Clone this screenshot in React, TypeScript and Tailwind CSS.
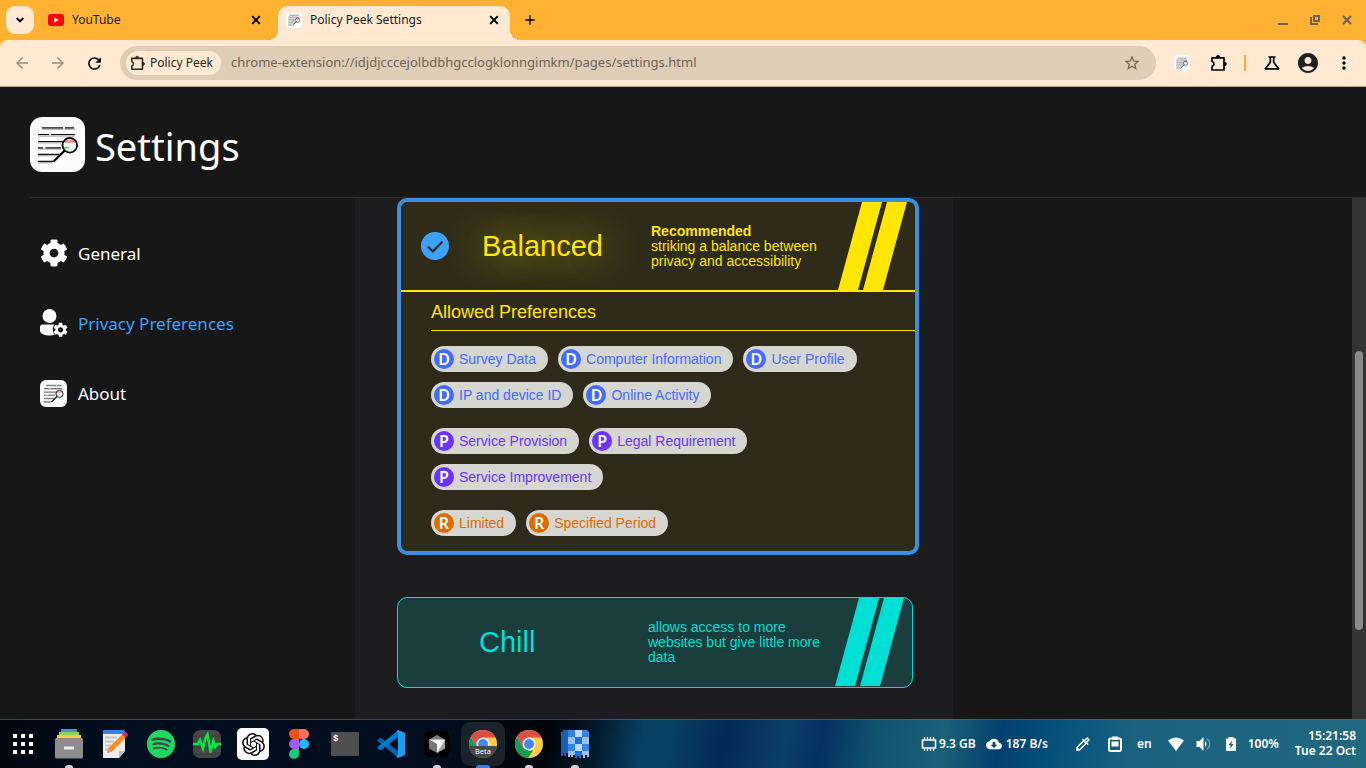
import React from "react";
import { FaCog } from "react-icons/fa";
import {
  MdArrowBack,
  MdArrowForward,
  MdRefresh,
  MdStarOutline,
  MdOutlineScience,
  MdAccountCircle,
  MdMoreVert,
  MdSettings,
  MdAdd,
  MdCloudDownload,
  MdOutlineColorize,
} from "react-icons/md";
import { SiOpenai, SiSpotify } from "react-icons/si";

function PeekLogo({ className }: { className: string }) {
  return (
    <svg viewBox="0 0 55 55" className={className} aria-hidden="true">
      <rect width="55" height="55" rx="12" fill="#fcfcfc" />
      <g stroke="#b9b9b9" strokeWidth="1.6">
        <path d="M12 12.3H45M8 19H45M8 25.8H33M8 32H31M8 38.6H28M8 45.6H22" />
      </g>
      <g stroke="#111" strokeWidth="1.2">
        <path d="M12 10.8H33M35 10.8H44M8 17.5H19M21 17.5H45M8 24.5H34M8 30.8H13M15.500 30.800H31M8 37.300H29M8 44.300H23" />
      </g>
      <path d="M34.500 24.500H45" stroke="#f28a86" strokeWidth="2.6" />
      <path d="M34 30.800H39" stroke="#62e36a" strokeWidth="2" />
      <circle cx="39.8" cy="28.3" r="7.3" fill="none" stroke="#0a0a0a" strokeWidth="1.8" />
      <path d="M34.600 33.600L23.300 44.800" stroke="#0a0a0a" strokeWidth="2.2" />
    </svg>
  );
}

function Puzzle({ className }: { className: string }) {
  return (
    <svg viewBox="0 0 18 18" className={className} fill="none" stroke="currentColor" strokeWidth="1.7" strokeLinejoin="round" aria-hidden="true">
      <path d="M2 3.800H14V16H2V12.300C4.600 11.800 4.600 8 2 7.500Z" />
      <path d="M6.200 3.200a1.800 1.800 0 0 1 3.600 0ZM14.600 8.100a1.800 1.800 0 0 1 0 3.600Z" fill="currentColor" strokeWidth="0.800" />
    </svg>
  );
}

function CloseMark() {
  return (
    <svg viewBox="0 0 10 10" className="size-2.5" stroke="currentColor" strokeWidth="1.900" aria-hidden="true">
      <path d="M1.200 1.200L8.800 8.800M8.800 1.200L1.200 8.800" />
    </svg>
  );
}

function UserGear() {
  return (
    <svg viewBox="0 0 28 28" className="size-7" fill="#fff" aria-hidden="true">
      <circle cx="9.500" cy="7" r="7" />
      <path d="M2.300 15.500H14.500C12.300 18 12.200 22.500 14.800 26.100C9 27.200 0 26.300 0 21.500V18C0 16.500 1 15.500 2.300 15.500Z" />
      <MdSettings x="11.800" y="12" size={17.5} color="#fff" />
    </svg>
  );
}

function TabStrip() {
  return (
    <div className="flex h-10 items-start bg-[#ffb232] pt-1.5 pl-1.5 text-[12px] text-[#1d1a16]">
      <button aria-label="Search tabs" className="flex h-7 w-7 items-center justify-center rounded-[9px] bg-[#ffe9d2] text-black">
        <svg viewBox="0 0 8 6" className="h-1.5 w-2" fill="none" stroke="currentColor" strokeWidth="1.900" aria-hidden="true">
          <path d="M0.700 1L4 4.300L7.300 1" />
        </svg>
      </button>
      <div className="ml-3.5 flex h-7 w-[213px] items-center gap-2">
        <svg viewBox="0 0 16 12" className="h-3 w-4" aria-hidden="true">
          <rect width="16" height="12" rx="3" fill="#f00" />
          <path d="M6.300 3.500L10.800 6L6.300 8.500Z" fill="#fff" />
        </svg>
        <span className="flex-1">YouTube</span>
        <button aria-label="Close YouTube" className="text-black"><CloseMark /></button>
      </div>
      <div className="relative ml-[17px] flex h-[34px] w-[232px] items-center gap-2 rounded-t-[10px] bg-[#ffe9d2] pr-[11px] pb-1.5 pl-2">
        <span className="absolute bottom-0 -left-2.5 size-2.5 bg-[radial-gradient(circle_at_0_0,transparent_10px,#ffe9d2_10px)]" />
        <span className="absolute -right-2.5 bottom-0 size-2.5 bg-[radial-gradient(circle_at_100%_0,transparent_10px,#ffe9d2_10px)]" />
        <PeekLogo className="size-4" />
        <span className="flex-1">Policy Peek Settings</span>
        <button aria-label="Close Policy Peek Settings" className="text-black"><CloseMark /></button>
      </div>
      <button aria-label="New tab" className="ml-3 flex h-7 w-4 items-center justify-center text-black">
        <MdAdd size={18} />
      </button>
      <div className="ml-auto flex h-7 items-center gap-[22px] pr-3.5 text-[#6d6357]">
        <button aria-label="Minimize" className="block size-2.5 border-b-2 border-current" />
        <button aria-label="Restore">
          <svg viewBox="0 0 10 10" className="size-2.5" fill="none" stroke="currentColor" strokeWidth="2" aria-hidden="true">
            <path d="M4 1H9V6H4ZM1 2V9H8" />
          </svg>
        </button>
        <button aria-label="Close window">
          <svg viewBox="0 0 10 10" className="size-2.5" stroke="currentColor" strokeWidth="2.200" aria-hidden="true">
            <path d="M1 1L9 9M9 1L1 9" />
          </svg>
        </button>
      </div>
    </div>
  );
}

function Toolbar() {
  return (
    <div className="bg-[#ffb232]">
      <div className="flex h-[47px] items-center rounded-t-lg border-b border-[#bba997] bg-[#ffe9d2] pr-3 pl-[13px] text-black">
        <button aria-label="Back" className="text-[#9c8f81]"><MdArrowBack size={18} /></button>
        <button aria-label="Forward" className="ml-[18px] text-[#9c8f81]"><MdArrowForward size={18} /></button>
        <button aria-label="Reload" className="ml-[18px]"><MdRefresh size={19} /></button>
        <div className="ml-4 flex h-[34px] flex-1 items-center rounded-full bg-[#dfcdb8] pr-[15px] pl-1.5">
          <span className="flex h-6 items-center gap-1 rounded-full bg-[#ffe9d2] pr-2 pl-1 text-[12px] text-[#2b2723]">
            <Puzzle className="size-4" />
            Policy Peek
          </span>
          <input
            aria-label="Address"
            readOnly
            value="chrome-extension://idjdjcccejolbdbhgcclogklonngimkm/pages/settings.html"
            className="ml-2.5 min-w-0 flex-1 bg-transparent text-[13px] text-[#6d6357] outline-none"
          />
          <button aria-label="Bookmark" className="text-[#6d6357]"><MdStarOutline size={18} /></button>
        </div>
        <div className="ml-[18px] flex items-center">
          <PeekLogo className="size-4" />
          <button aria-label="Extensions" className="ml-5"><Puzzle className="size-[18px]" /></button>
          <span className="ml-4 h-4 w-0.5 bg-[#ffb232]" />
          <button aria-label="Labs" className="ml-4"><MdOutlineScience size={20} /></button>
          <button aria-label="Profile" className="ml-3.5 text-[#1f1f1f]"><MdAccountCircle size={24} /></button>
          <button aria-label="Menu" className="ml-3.5"><MdMoreVert size={20} /></button>
        </div>
      </div>
    </div>
  );
}

const navItems = [
  { label: "General", icon: <FaCog size={28} color="#fff" />, active: false },
  { label: "Privacy Preferences", icon: <UserGear />, active: true },
  { label: "About", icon: <PeekLogo className="size-[27px]" />, active: false },
];

function Sidebar() {
  return (
    <nav className="flex w-[355px] shrink-0 flex-col gap-[42px] pt-[41px] pl-10">
      {navItems.map((item) => (
        <a key={item.label} href="#" className={`flex h-7 items-center gap-2.5 text-[17px] ${item.active ? "text-[#3ca2ff]" : "text-white"}`}>
          <span className="flex w-7">{item.icon}</span>
          <span className="pt-0.5">{item.label}</span>
        </a>
      ))}
    </nav>
  );
}

function Stripes() {
  return (
    <svg viewBox="0 0 69 88" className="ml-auto h-[88px] w-[69px] shrink-0" fill="currentColor" aria-hidden="true">
      <path d="M24 0H44L20 88H0ZM49 0H69L45 88H25Z" />
    </svg>
  );
}

const groups = [
  { letter: "D", text: "text-[#426bff]", badge: "bg-[#426bff]", items: ["Survey Data", "Computer Information", "User Profile", "IP and device ID", "Online Activity"] },
  { letter: "P", text: "text-[#6a33ff]", badge: "bg-[#6a33ff]", items: ["Service Provision", "Legal Requirement", "Service Improvement"] },
  { letter: "R", text: "text-[#de6b00]", badge: "bg-[#de6b00]", items: ["Limited", "Specified Period"] },
];

function BalancedCard() {
  return (
    <section className="box-content w-[514px] overflow-hidden rounded-[10px] border-4 border-[#3a8fe0] bg-[#2f2b1a] text-[#ffe600]">
      <div className="flex h-[90px] items-center border-b-2 border-[#ffe600] pr-2">
        <span className="ml-5 flex size-7 items-center justify-center rounded-full bg-[#3ca2ff]">
          <svg viewBox="0 0 28 28" className="size-7" fill="none" stroke="#2f2b1a" strokeWidth="2.300" strokeLinecap="round" strokeLinejoin="round" aria-hidden="true">
            <path d="M7.500 15.300L11.800 19.500L20.800 10.300" />
          </svg>
        </span>
        <h2 className="ml-[33px] w-[169px] text-[29px] leading-8 [text-shadow:0_0_40px_#ffe600]">Balanced</h2>
        <p className="w-[178px] text-[14px] leading-[15px]">
          <strong>Recommended</strong>
          <br />
          striking a balance between privacy and accessibility
        </p>
        <Stripes />
      </div>
      <div className="pb-[15px] pl-[30px]">
        <h3 className="border-b border-[#ffe600] pt-[9px] pb-[7px] text-[18px] leading-[22px]">Allowed Preferences</h3>
        <div className="flex flex-col gap-5 pt-[15px]">
          {groups.map((g) => (
            <ul key={g.letter} className={`flex flex-wrap gap-2.5 text-[14px] ${g.text}`}>
              {g.items.map((item) => (
                <li key={item} className="flex h-[26px] items-center gap-[5px] rounded-full bg-[#d6d6d1] pr-3 pl-[3px]">
                  <span className={`flex size-5 items-center justify-center rounded-full font-['Noto_Sans'] text-[16px] leading-5 font-semibold text-white ${g.badge}`}>{g.letter}</span>
                  {item}
                </li>
              ))}
            </ul>
          ))}
        </div>
      </div>
    </section>
  );
}

function ChillCard() {
  return (
    <section className="mt-[42px] box-content flex w-[514px] overflow-hidden rounded-[10px] border border-[#00dfd3] bg-[#1a3e3d] pb-px text-[#00dfd3]">
      <div className="flex h-[88px] flex-1 items-center pr-2">
        <h2 className="ml-[81px] w-[169px] text-[29px] leading-8">Chill</h2>
        <p className="w-[178px] text-[14px] leading-[15px]">allows access to more websites but give little more data</p>
        <Stripes />
      </div>
    </section>
  );
}

function ChromeLogo({ beta = false }: { beta?: boolean }) {
  return (
    <svg viewBox="0 0 28 28" className="size-7" aria-hidden="true">
      <clipPath id={beta ? "beta-disc" : "chrome-disc"}>
        <circle cx="14" cy="14" r="14" />
      </clipPath>
      <g clipPath={beta ? "url(#beta-disc)" : "url(#chrome-disc)"}>
        <rect width="28" height="28" fill="#ffce44" />
        <path d="M0 5L1.900 7L8.300 17.500L14 20.500H18L13 28H0Z" fill="#109d58" />
        <path d="M1.900 7L8.300 17.500L14 7.500H28V0H0Z" fill="#dd4f43" />
        <circle cx="14" cy="14" r="6.500" fill="#f4f4f4" />
        <circle cx="14" cy="14" r="5" fill="#4587f3" />
        {beta && <rect y="16" width="28" height="12" fill="#484848" />}
      </g>
      {beta && <text x="14" y="24" textAnchor="middle" fontSize="7.500" fontWeight="400" fill="#fff" fontFamily="Noto Sans">Beta</text>}
    </svg>
  );
}

const apps = [
  {
    name: "Show apps",
    mark: "",
    icon: (
      <svg viewBox="0 0 20 20" className="size-5" fill="#fff" aria-hidden="true">
        <path d="M0 0h4v4h-4zM8 0h4v4h-4zM16 0h4v4h-4zM0 8h4v4h-4zM8 8h4v4h-4zM16 8h4v4h-4zM0 16h4v4h-4zM8 16h4v4h-4zM16 16h4v4h-4z" />
      </svg>
    ),
  },
  {
    name: "Files",
    mark: "w-2 bg-[#d0d0d0]",
    icon: (
      <svg viewBox="0 0 28 30" className="h-[30px] w-7" aria-hidden="true">
        <path d="M6 0H22V4H6Z" fill="#4a90d9" />
        <path d="M4 3H24V7H4Z" fill="#8bd254" />
        <path d="M2 6H26V10H2Z" fill="#f7c84a" />
        <rect y="9" width="28" height="20.500" rx="1.500" fill="#8d8d8d" />
        <rect x="9" y="17.500" width="10" height="3" rx="0.500" fill="#eee" />
      </svg>
    ),
  },
  {
    name: "Text editor",
    mark: "",
    icon: (
      <svg viewBox="0 0 28 28" className="size-7" aria-hidden="true">
        <path d="M2 1H24V21L18 28H2Z" fill="#ececec" />
        <path d="M18 28V21H24Z" fill="#bdbdbd" />
        <path d="M2 1.500Q2 0 3.500 0H22.500Q24 0 24 1.500V4H2Z" fill="#3584e4" />
        <path d="M4 7.500H16M4 11.500H13M4 15.500H10M4 19.500H8" stroke="#c3c3c3" strokeWidth="2" />
        <path d="M6 23L7.500 18L21 4.500L24.500 8L11 21.500Z" fill="#ff8c1f" />
        <path d="M6 23L7.500 18L11 21.500Z" fill="#d9a066" />
        <path d="M21 4.500L23 2.500Q24.500 1.500 26 3T26.500 6L24.500 8Z" fill="#e5256b" />
      </svg>
    ),
  },
  { name: "Spotify", mark: "", icon: <span className="rounded-full bg-[#3a4a40]"><SiSpotify size={28} color="#1ed760" /></span> },
  {
    name: "System monitor",
    mark: "",
    icon: (
      <svg viewBox="0 0 28 28" className="size-7" aria-hidden="true">
        <rect width="28" height="28" rx="7" fill="#474747" />
        <path d="M0 6H28M0 12H28M0 18H28M0 24H28" stroke="#3b3b3b" />
        <path d="M0 14H5L7 10L10 18.500L12.500 8L14.500 4.500L17.500 22.500L20.300 11L22.300 17L24.300 14H28" fill="none" stroke="#00e93f" strokeWidth="2.600" />
      </svg>
    ),
  },
  { name: "ChatGPT", mark: "", icon: <span className="flex size-8 items-center justify-center rounded-[5px] bg-white"><SiOpenai size={23} color="#111" /></span> },
  {
    name: "Figma",
    mark: "",
    icon: (
      <svg viewBox="0 0 20 30" className="h-[30px] w-5" aria-hidden="true">
        <path d="M10 0H5a5 5 0 0 0 0 10h5Z" fill="#f24e1e" />
        <path d="M10 0h5a5 5 0 0 1 0 10h-5Z" fill="#ff7262" />
        <path d="M10 10H5a5 5 0 0 0 0 10h5Z" fill="#a259ff" />
        <circle cx="15" cy="15" r="5" fill="#1abcfe" />
        <path d="M10 20H5a5 5 0 1 0 5 5Z" fill="#0acf83" />
      </svg>
    ),
  },
  { name: "Terminal", mark: "", icon: <span className="h-6 w-7 rounded-[1px] bg-[#4f4f4f] pt-px pl-0.5 text-left font-['Liberation_Mono',monospace] text-[9px] leading-3 font-bold text-white">$</span> },
  {
    name: "Code",
    mark: "",
    icon: (
      <svg viewBox="0 0 28 28" className="size-7" aria-hidden="true">
        <path d="M1 9.500L3 8Q3.500 7.700 4 8L21 21V27.500L0.500 11Q0 10.200 1 9.500Z" fill="#0065a9" />
        <path d="M1 18.500L3 20Q3.500 20.300 4 20L21 7V0.500L0.500 17Q0 17.800 1 18.500Z" fill="#007acc" />
        <path d="M21 0L28 3V25L21 28Q19.500 27.500 19.500 26L21 24V4L19.500 2Q19.500 0.500 21 0Z" fill="#1f9cf0" />
      </svg>
    ),
  },
  {
    name: "Cursor",
    mark: "w-2 bg-[#d0d0d0]",
    icon: (
      <svg viewBox="0 0 26 26" className="size-[26px]" aria-hidden="true">
        <rect width="26" height="26" rx="5" fill="#000" />
        <path d="M13 4L21 8.500L13 13L5 8.500Z" fill="#7b7b7b" />
        <path d="M5 8.500L13 13V22L5 17.500Z" fill="#777" />
        <path d="M21 8.500V17.500L13 22V13Z" fill="#a5a5a5" />
        <path d="M5 8.500H21L13 22V13Z" fill="#f4f4f4" />
      </svg>
    ),
  },
  { name: "Chrome Beta", mark: "w-3.5 bg-[#3584e4]", icon: <span className="flex size-11 items-center justify-center rounded-[9px] bg-[#1b222b]"><ChromeLogo beta /></span> },
  { name: "Chrome", mark: "w-2 bg-[#d0d0d0]", icon: <ChromeLogo /> },
  {
    name: "Mosaic",
    mark: "w-2 bg-[#d0d0d0]",
    icon: (
      <svg viewBox="0 0 28 28" className="size-7" aria-hidden="true">
        <path d="M3 0H26L28 2V27H26V25H24V28H22V25H20V28H18V26H16V28H14V25H12V27H10V25H9V27H7V23H5V26H3V23H2V26H0V3Z" fill="#3584e4" />
        <path d="M3 0H7V23H5V26H3V23H2V26H0V3Z" fill="#1a5fb4" />
        <path d="M14 0H21V7H14ZM14 14H21V21H14Z" fill="#bcd8fb" />
        <path d="M7 7H14V14H7ZM21 7H28V14H21ZM7 21H14V25H12V27H10V25H9V27H7ZM21 21H28V27H26V25H24V28H22V25H21Z" fill="#99c1f1" />
        <path d="M14 7H21V14H14ZM14 21H21V25H20V28H18V26H16V28H14Z" fill="#1c71d8" />
      </svg>
    ),
  },
];

function Taskbar() {
  return (
    <footer className="flex h-[49px] shrink-0 items-stretch border-t border-[#2f7fa5]/60 bg-[linear-gradient(100deg,#010610_0%,#02101f_10%,#010d1c_22%,#020f20_32%,#010409_40%,#04182a_43.5%,#064163_47%,#073f63_49%,#022a57_53%,#0a4068_57.5%,#033060_60%,#11536f_64%,#1a6079_69%,#03406f_73%,#04517b_77%,#1a6380_83%,#21697f_100%)] bg-origin-border text-[12px] font-semibold text-white">
      <div className="flex">
        {apps.map((app) => (
          <button key={app.name} aria-label={app.name} className="relative flex w-[46px] items-center justify-center">
            {app.icon}
            {app.mark && <span className={`absolute bottom-0 h-[3px] rounded-t-sm ${app.mark}`} />}
          </button>
        ))}
      </div>
      <div className="ml-auto flex items-center pr-2.5">
        <svg viewBox="0 0 16 16" className="size-4" fill="none" stroke="#fff" aria-hidden="true">
          <path d="M1.500 4H14.500V12H1.500Z" strokeWidth="1.600" />
          <path d="M3.500 1V3M6.500 1V3M9.500 1V3M12.500 1V3M3.500 13V15M6.500 13V15M9.500 13V15M12.500 13V15" strokeWidth="1.300" />
        </svg>
        <span className="ml-0.5">9.3 GB</span>
        <MdCloudDownload size={16} className="ml-2.5" />
        <span className="ml-1">187 B/s</span>
        <MdOutlineColorize size={18} className="ml-[26px]" />
        <svg viewBox="0 0 16 16" className="ml-[15px] size-4" aria-hidden="true">
          <path d="M3.500 2.500H12.500Q14 2.500 14 4V13.500Q14 15 12.500 15H3.500Q2 15 2 13.500V4Q2 2.500 3.500 2.500Z" fill="none" stroke="#fff" strokeWidth="2" />
          <path d="M5 0.500H11V4H5ZM4.500 5.500H11.500V10.500H4.500Z" fill="#fff" />
        </svg>
        <span className="ml-3.5">en</span>
        <svg viewBox="0 0 16 14" className="ml-4 h-3.5 w-4" fill="#fff" aria-hidden="true">
          <path d="M0 3.500Q8 -2.500 16 3.500L8 14Z" />
        </svg>
        <svg viewBox="0 0 16 16" className="ml-3 size-4" aria-hidden="true">
          <path d="M0.500 5H3.500L7.500 1V15L3.500 11H0.500Z" fill="#fff" />
          <path d="M9 5Q12 8 9 11Z" fill="#fff" />
          <path d="M11 2.500Q16.500 8 11 13.500" fill="none" stroke="#fff" strokeOpacity="0.350" strokeWidth="1.500" />
        </svg>
        <svg viewBox="0 0 10 14" className="ml-3.5 h-3.5 w-2.5" aria-hidden="true">
          <path d="M2.500 0H7.500V1.500H10V14H0V1.500H2.500Z" fill="#fff" />
          <path d="M6 3.500L2.300 8.300H4.600L4 12L7.700 7H5.400Z" fill="#1d6680" />
        </svg>
        <span className="ml-3">100%</span>
        <span className="ml-4 pb-0.5 text-right leading-[15px]">
          15:21:58
          <br />
          Tue 22 Oct
        </span>
      </div>
    </footer>
  );
}

export default function App() {
  return (
    <div className="flex h-screen flex-col overflow-hidden bg-[#171717] font-['Noto_Sans',sans-serif]">
      <TabStrip />
      <Toolbar />
      <header className="ml-[30px] flex h-[111px] shrink-0 items-center gap-2.5 border-b border-[#2e2e2e] pt-1 text-white">
        <PeekLogo className="size-[55px]" />
        <h1 className="pt-1 text-[38px] leading-[54px]">Settings</h1>
      </header>
      <div className="flex min-h-0 flex-1">
        <Sidebar />
        <main className="w-[598px] overflow-hidden bg-[#1d1d1f] pl-[42px] font-['Liberation_Sans',Arial,sans-serif]">
          <BalancedCard />
          <ChillCard />
        </main>
        <div className="ml-auto flex w-3.5 flex-col items-center bg-[#333]">
          <div className="mt-[153px] h-[279px] w-2 rounded-full bg-[#8a8a8a]" />
        </div>
      </div>
      <Taskbar />
    </div>
  );
}
